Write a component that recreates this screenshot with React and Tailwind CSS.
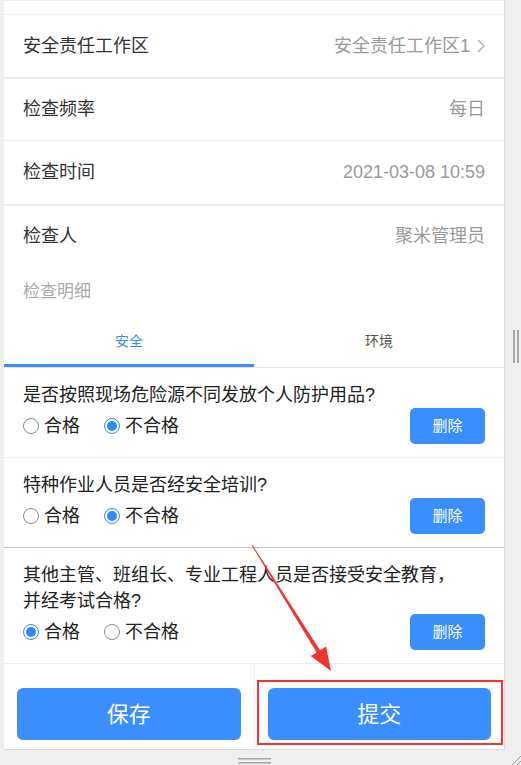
import React from 'react'

const FONT = { fontFamily: '"Liberation Sans", "Noto Sans CJK SC", sans-serif' }

const rows = [
  { label: '安全责任工作区', value: '安全责任工作区1', arrow: true, h: 'h-[64px]', border: 'border-b-2' },
  { label: '检查频率', value: '每日', h: 'h-[62px]', border: 'border-b' },
  { label: '检查时间', value: '2021-03-08 10:59', h: 'h-[65px]', border: 'border-b-2' },
  { label: '检查人', value: '聚米管理员', h: 'h-[60px]', border: '' },
]

const questions = [
  { text: ['是否按照现场危险源不同发放个人防护用品?'], ok: false, border: 'border-[#eeeeee]' },
  { text: ['特种作业人员是否经安全培训?'], ok: false, border: 'border-[#c4c4c4]' },
  { text: ['其他主管、班组长、专业工程人员是否接受安全教育，', '并经考试合格?'], ok: true, border: 'border-[#eeeeee]' },
]

function Radio({ checked, label }) {
  return (
    <label className="flex items-center gap-[5px]">
      {checked ? (
        <span className="flex h-[16px] w-[16px] items-center justify-center rounded-full border border-[#2f88ff]">
          <span className="h-[10px] w-[10px] rounded-full bg-[#2f88ff]" />
        </span>
      ) : (
        <span className="h-[16px] w-[16px] rounded-full border border-[#8a8a8a]" />
      )}
      <span className="text-[18px] text-[#222]">{label}</span>
    </label>
  )
}

function Question({ q }) {
  return (
    <div className={`border-b ${q.border} px-[19px] pt-[14px] pb-[13px]`}>
      {q.text.map((t) => (
        <div key={t} className="text-[18px] leading-[26px] text-[#222]">{t}</div>
      ))}
      <div className="flex h-[36px] items-center justify-between">
        <div className="flex items-center gap-[24px]">
          <Radio checked={q.ok} label="合格" />
          <Radio checked={!q.ok} label="不合格" />
        </div>
        <button className="h-[36px] w-[75px] rounded-[5px] bg-[#3a8eff] text-[15px] text-white">删除</button>
      </div>
    </div>
  )
}

export default function App() {
  return (
    <div className="relative h-[765px] w-[521px] overflow-hidden bg-[#efefef]" style={FONT}>
      <div className="ml-[4px] w-[501px] border-r border-b border-[#dcdcdc] bg-white">
        <div className="h-[15px] border-b border-t border-[#eeeeee]" />
        {rows.map((r) => (
          <div
            key={r.label}
            className={`flex ${r.h} items-center justify-between ${r.border} border-[#eeeeee] px-[19px] text-[18px]`}
          >
            <span className="text-[#333]">{r.label}</span>
            <span className="flex items-center gap-[7px] text-[#9a9a9a]">
              {r.value}
              {r.arrow ? (
                <svg width="8" height="14" viewBox="0 0 8 14">
                  <polyline points="1,1 7,7 1,13" fill="none" stroke="#b5b5b5" strokeWidth="1.5" />
                </svg>
              ) : null}
            </span>
          </div>
        ))}
        <div className="flex h-[52px] items-center px-[19px] text-[17px] text-[#aaaaaa]">检查明细</div>
        <div className="flex h-[50px] border-b border-[#e6e6e6] text-[14px]">
          <div className="flex flex-1 flex-col">
            <div className="flex flex-1 items-center justify-center text-[#3a8eff]">安全</div>
            <div className="h-[3px] bg-[#3a8eff]" />
          </div>
          <div className="flex flex-1 items-center justify-center pb-[3px] text-[#555]">环境</div>
        </div>
        {questions.map((q, i) => (
          <Question key={i} q={q} />
        ))}
        <div className="flex h-[85px]">
          <div className="flex flex-1 border-r border-[#eeeeee] px-[13px] pt-[24px]">
            <button className="h-[52px] w-full rounded-[6px] bg-[#3a8eff] text-[22px] text-white">保存</button>
          </div>
          <div className="flex flex-1 px-[13px] pt-[24px]">
            <button className="h-[52px] w-full rounded-[6px] bg-[#3a8eff] text-[22px] text-white">提交</button>
          </div>
        </div>
      </div>

      {/* red highlight box over the submit button */}
      <div className="absolute left-[257px] top-[680px] h-[65px] w-[246px] border-2 border-[#f43333]" />

      {/* red arrow */}
      <svg className="absolute left-0 top-0" width="521" height="765">
        <polygon
          points="251.6,545.3 252.4,544.7 320,650.2 326,646.5 331,671 310.7,656.1 316.6,652.4"
          fill="#f43333"
        />
        {/* scroll handle on the right */}
        <rect x="513" y="330" width="2" height="33" fill="#a8a8a8" />
        <rect x="517" y="330" width="2" height="33" fill="#a8a8a8" />
        {/* bottom drag handle */}
        <rect x="238" y="758" width="33" height="1.5" fill="#a8a8a8" />
        <rect x="238" y="762" width="33" height="1.5" fill="#a8a8a8" />
        {/* resize grip */}
        <line x1="512" y1="765" x2="521" y2="756" stroke="#9a9a9a" strokeWidth="1" />
        <line x1="517" y1="765" x2="521" y2="761" stroke="#9a9a9a" strokeWidth="1" />
      </svg>
    </div>
  )
}
